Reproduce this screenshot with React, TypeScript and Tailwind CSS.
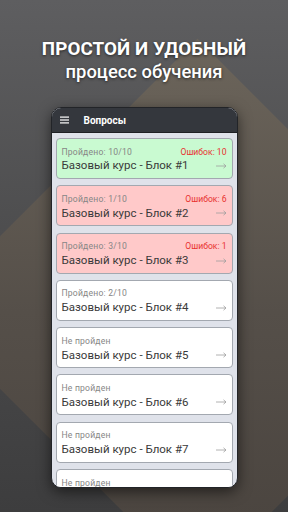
import React from "react";

type Card = { status: string; title: string; errors?: string; bg: string };

const cards: Card[] = [
  { status: "Пройдено: 10/10", title: "Базовый курс - Блок #1", errors: "Ошибок: 10", bg: "bg-[#c9fad1]" },
  { status: "Пройдено: 1/10", title: "Базовый курс - Блок #2", errors: "Ошибок: 6", bg: "bg-[#ffc9c9]" },
  { status: "Пройдено: 3/10", title: "Базовый курс - Блок #3", errors: "Ошибок: 1", bg: "bg-[#ffc9c9]" },
  { status: "Пройдено: 2/10", title: "Базовый курс - Блок #4", bg: "bg-white" },
  { status: "Не пройден", title: "Базовый курс - Блок #5", bg: "bg-white" },
  { status: "Не пройден", title: "Базовый курс - Блок #6", bg: "bg-white" },
  { status: "Не пройден", title: "Базовый курс - Блок #7", bg: "bg-white" },
  { status: "Не пройден", title: "Базовый курс - Блок #8", bg: "bg-white" },
];

function Arrow() {
  return (
    <svg width="11" height="6" viewBox="0 0 11 6" fill="none">
      <path d="M0 3H10M7.5 0.8L10 3L7.5 5.2" stroke="#a0a0a0" strokeWidth="0.8" />
    </svg>
  );
}

export default function App() {
  return (
    <div
      className="relative w-[288px] h-[512px] overflow-hidden bg-gradient-to-b from-[#5e5e60] via-[#4c4c4d] to-[#3d3d3e]"
      style={{ fontFamily: "Roboto, 'Noto Sans', sans-serif" }}
    >
      <div className="absolute left-[3.5px] top-[118.5px] w-[387px] h-[387px] rotate-45 bg-gradient-to-br from-[#6c655b] via-[#554f49] to-[#48423d]" />
      <div className="relative flex flex-col items-center">
        <div className="mt-[37px] h-[24px] flex items-center text-white font-bold text-[18.8px] tracking-[0.1px] [text-shadow:0_1px_3px_rgba(0,0,0,0.6)]">
          ПРОСТОЙ И УДОБНЫЙ
        </div>
        <div className="h-[22px] flex items-center text-white font-medium text-[18.4px] [text-shadow:0_1px_3px_rgba(0,0,0,0.6)]">
          процесс обучения
        </div>
        <div className="mt-[24px] w-[187px] h-[381px] rounded-[10px] border border-[#222428] overflow-hidden flex flex-col bg-[#dfe2ea] shadow-[0_4px_14px_rgba(0,0,0,0.55)]">
          <div className="h-[25px] shrink-0 bg-[#34373d] flex items-center px-[8px] border-b border-[#1e2024]">
            <svg width="9" height="8" viewBox="0 0 9 8">
              <rect x="0" y="0.5" width="9" height="1.2" fill="#fff" />
              <rect x="0" y="3.4" width="9" height="1.2" fill="#fff" />
              <rect x="0" y="6.3" width="9" height="1.2" fill="#fff" />
            </svg>
            <span className="ml-[15px] text-white font-bold text-[10px]">Вопросы</span>
          </div>
          <div className="flex flex-col gap-[6.3px] px-[4px] pt-[5px]">
            {cards.map((c, i) => (
              <div
                key={i}
                className={`shrink-0 h-[41px] rounded-[4px] border border-[#a3a8b0] ${c.bg} flex flex-col px-[5px] pt-[7px]`}
              >
                <div className="h-[12px] flex items-center justify-between">
                  <span className="text-[8.6px] tracking-[0.2px] text-[#868686]">{c.status}</span>
                  {c.errors && <span className="text-[8.6px] text-[#e8312f]">{c.errors}</span>}
                </div>
                <div className="mt-[1px] h-[14px] flex items-center justify-between">
                  <span className="text-[11.5px] text-[#3a3a3a]">{c.title}</span>
                  <Arrow />
                </div>
              </div>
            ))}
          </div>
        </div>
      </div>
    </div>
  );
}
